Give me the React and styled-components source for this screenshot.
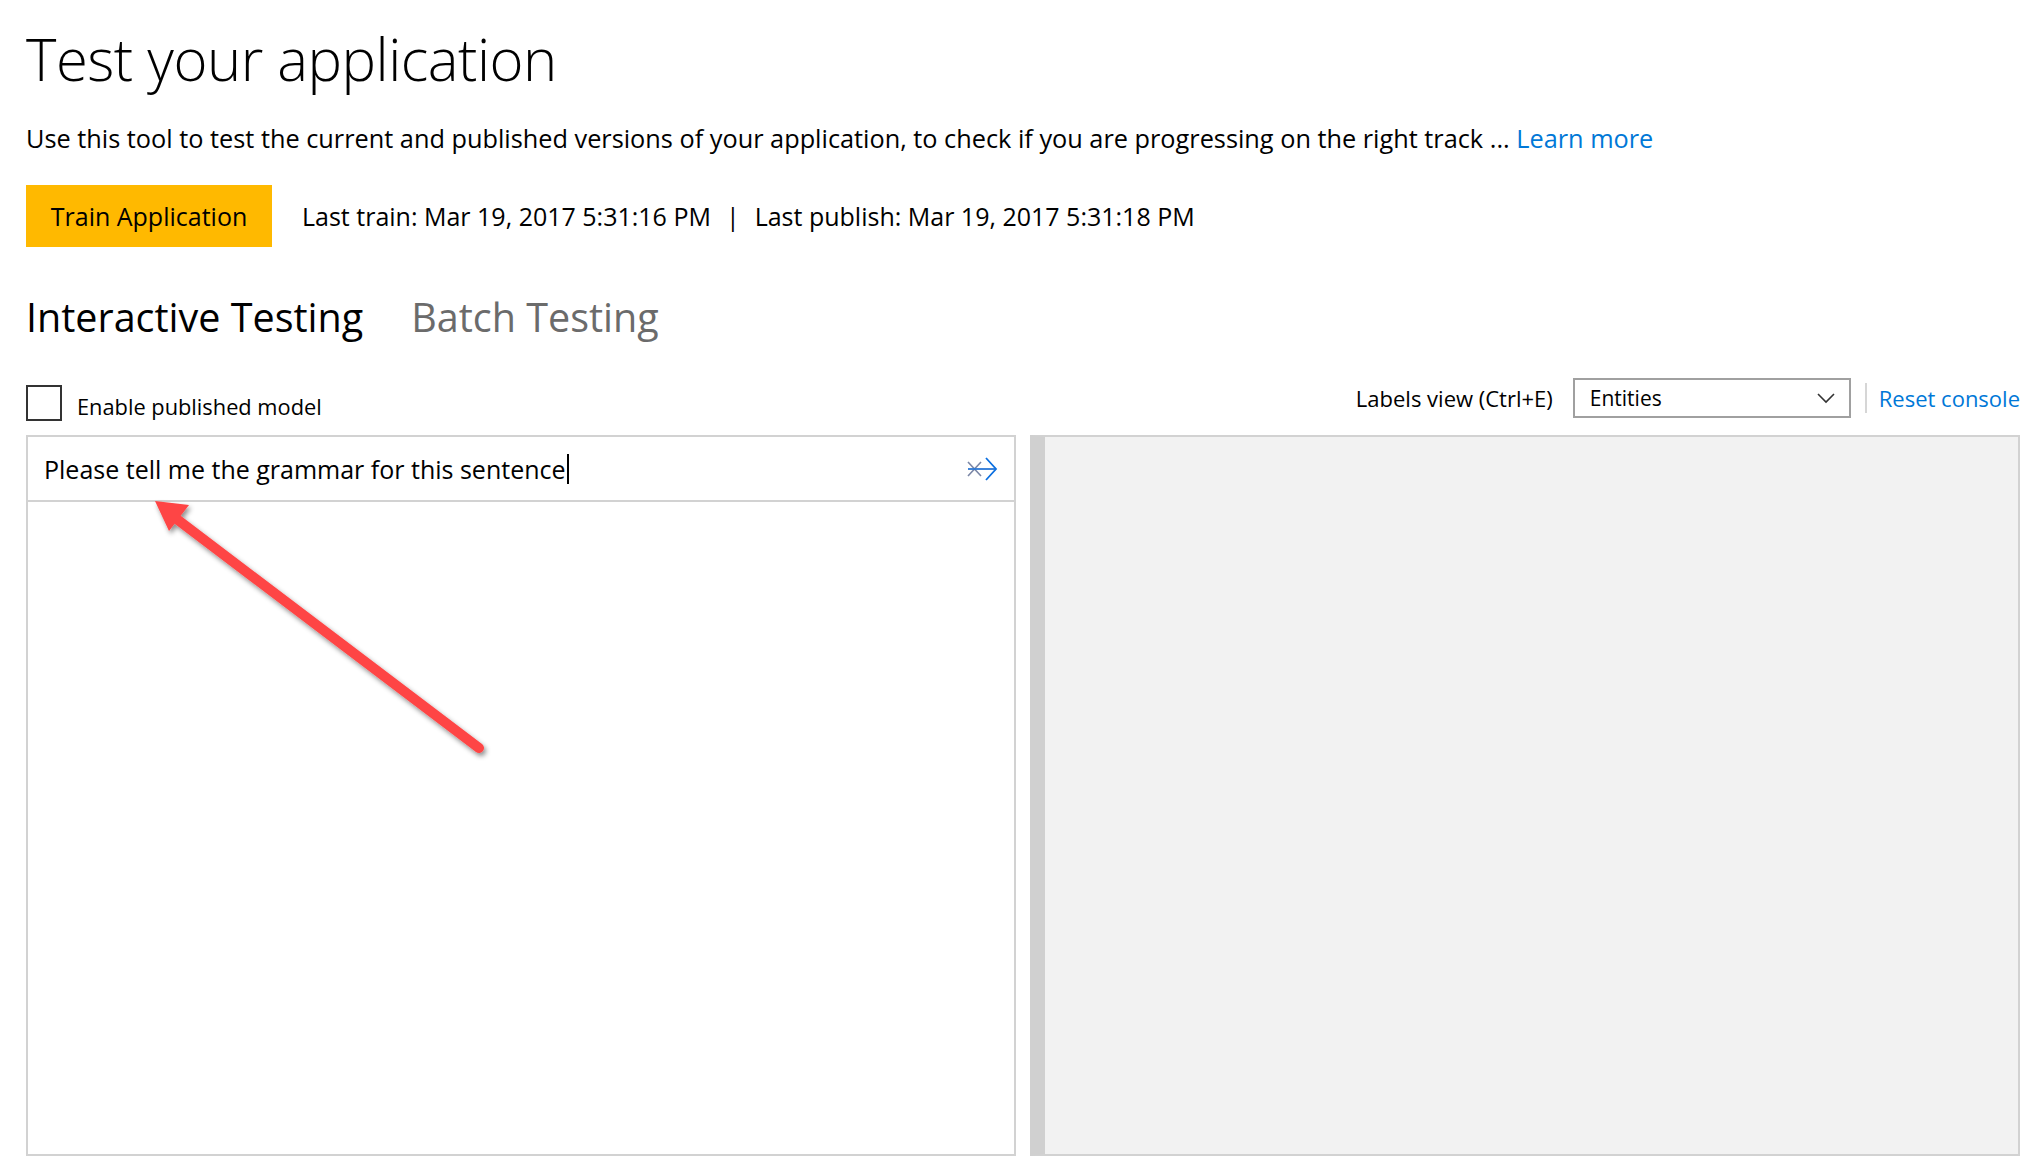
import React from "react";
import styled, { createGlobalStyle } from "styled-components";

const GlobalStyle = createGlobalStyle`
  html, body {
    margin: 0;
    padding: 0;
    background: #ffffff;
  }
  body {
    font-family: "Open Sans", "Noto Sans", "Liberation Sans", sans-serif;
    color: #000;
  }
`;

const Page = styled.div`
  width: 2040px;
  height: 1172px;
  box-sizing: border-box;
  padding: 0 20px 0 26px;
  display: flex;
  flex-direction: column;
  overflow: hidden;
`;

const Title = styled.h1`
  margin: 23px 0 0 0;
  font-size: 58px;
  font-weight: 300;
  line-height: 72px;
  letter-spacing: -0.5px;
`;

const Description = styled.p`
  margin: 26px 0 0 0;
  font-size: 25.3px;
  line-height: 34px;
`;

const Link = styled.a`
  color: #0078d7;
  text-decoration: none;
  cursor: pointer;
`;

const TrainRow = styled.div`
  display: flex;
  align-items: center;
  gap: 30px;
  margin-top: 30px;
`;

const TrainButton = styled.button`
  width: 246px;
  height: 62px;
  border: none;
  background: #ffb900;
  color: #000;
  font-family: inherit;
  font-size: 25px;
  padding: 0;
  cursor: pointer;
`;

const Status = styled.div`
  font-size: 25px;
  display: flex;
  gap: 15px;
`;

const Tabs = styled.div`
  display: flex;
  gap: 48px;
  margin-top: 44px;
`;

const Tab = styled.div`
  font-size: 39.5px;
  line-height: 52px;
  color: ${(p) => (p.$active ? "#000" : "#6b6b6b")};
  cursor: pointer;
`;

const ControlsRow = styled.div`
  display: flex;
  align-items: flex-end;
  justify-content: space-between;
  margin-top: 35px;
  margin-bottom: 14px;
`;

const CheckLabel = styled.label`
  display: flex;
  align-items: center;
  gap: 15px;
  font-size: 21.8px;
  cursor: pointer;
`;

const CheckText = styled.span`
  padding-top: 6px;
`;

const CheckBox = styled.span`
  width: 32px;
  height: 32px;
  border: 2px solid #333;
  display: inline-block;
`;

const RightControls = styled.div`
  display: flex;
  align-items: center;
  margin-bottom: 3px;
`;

const ControlText = styled.span`
  font-size: 22px;
`;

const ViewLabel = styled(ControlText)`
  margin-right: 20px;
`;

const Select = styled.div`
  width: 278px;
  height: 40px;
  box-sizing: border-box;
  border: 2px solid #a0a0a0;
  display: flex;
  align-items: center;
  justify-content: space-between;
  padding: 0 14px 0 15px;
  font-size: 21px;
`;

const Separator = styled.span`
  width: 2px;
  height: 30px;
  background: #d6d6d6;
  margin: 0 12px 0 14px;
`;

const Panels = styled.div`
  display: grid;
  grid-template-columns: 1fr 1fr;
  gap: 14px;
  height: 721px;
`;

const Console = styled.div`
  position: relative;
  border: 2px solid #d2d2d2;
  background: #fff;
  display: flex;
  flex-direction: column;
`;

const InputRow = styled.div`
  height: 63px;
  border-bottom: 2px solid #d2d2d2;
  display: flex;
  align-items: center;
  padding: 0 16px 0 16px;
`;

const Utterance = styled.div`
  flex: 1;
  font-size: 25px;
  display: flex;
  align-items: center;
`;

const Caret = styled.span`
  width: 2px;
  height: 30px;
  background: #000;
  margin-left: 1px;
`;

const SendButton = styled.button`
  border: none;
  background: none;
  padding: 0;
  display: flex;
  cursor: pointer;
`;

const Annotation = styled.svg`
  position: absolute;
  left: 0;
  top: 0;
  overflow: visible;
  pointer-events: none;
`;

const Results = styled.div`
  background: #f2f2f2;
  border: 2px solid #d2d2d2;
  border-left: 15px solid #d0d0d0;
`;

const ChevronDown = () => (
  <svg width="18" height="12" viewBox="0 0 18 12">
    <path d="M1 2 L9 10 L17 2" fill="none" stroke="#333" strokeWidth="1.6" />
  </svg>
);

const SendIcon = () => (
  <svg width="32" height="26" viewBox="0 0 32 26">
    <path d="M2 6 L15 20 M2 20 L15 6" stroke="#7a86a6" strokeWidth="1.6" fill="none" />
    <path d="M2 13 L30 13" stroke="#2b78d6" strokeWidth="1.8" fill="none" />
    <path d="M20 2 L30 13 L20 24" stroke="#0b6fe0" strokeWidth="1.8" fill="none" />
  </svg>
);

const Arrow = () => (
  <Annotation width="480" height="340" viewBox="0 0 480 340">
    <defs>
      <filter id="arrowShadow" x="-20%" y="-20%" width="140%" height="140%">
        <feDropShadow dx="2" dy="3" stdDeviation="2.5" floodColor="#000" floodOpacity="0.45" />
      </filter>
    </defs>
    <g filter="url(#arrowShadow)">
      <line x1="451" y1="311" x2="146" y2="80" stroke="#fe4545" strokeWidth="10" strokeLinecap="round" />
      <polygon points="127,64 161,68 141,94" fill="#fe4545" />
    </g>
  </Annotation>
);

export default function App() {
  return (
    <>
      <GlobalStyle />
      <Page>
        <Title>Test your application</Title>
        <Description>
          Use this tool to test the current and published versions of your application, to check if you are
          progressing on the right track ... <Link>Learn more</Link>
        </Description>
        <TrainRow>
          <TrainButton>Train Application</TrainButton>
          <Status>
            <span>Last train: Mar 19, 2017 5:31:16 PM</span>
            <span>|</span>
            <span>Last publish: Mar 19, 2017 5:31:18 PM</span>
          </Status>
        </TrainRow>
        <Tabs>
          <Tab $active>Interactive Testing</Tab>
          <Tab>Batch Testing</Tab>
        </Tabs>
        <ControlsRow>
          <CheckLabel>
            <CheckBox />
            <CheckText>Enable published model</CheckText>
          </CheckLabel>
          <RightControls>
            <ViewLabel>Labels view (Ctrl+E)</ViewLabel>
            <Select>
              <span>Entities</span>
              <ChevronDown />
            </Select>
            <Separator />
            <Link>
              <ControlText>Reset console</ControlText>
            </Link>
          </RightControls>
        </ControlsRow>
        <Panels>
          <Console>
            <InputRow>
              <Utterance>
                Please tell me the grammar for this sentence
                <Caret />
              </Utterance>
              <SendButton>
                <SendIcon />
              </SendButton>
            </InputRow>
            <Arrow />
          </Console>
          <Results />
        </Panels>
      </Page>
    </>
  );
}
